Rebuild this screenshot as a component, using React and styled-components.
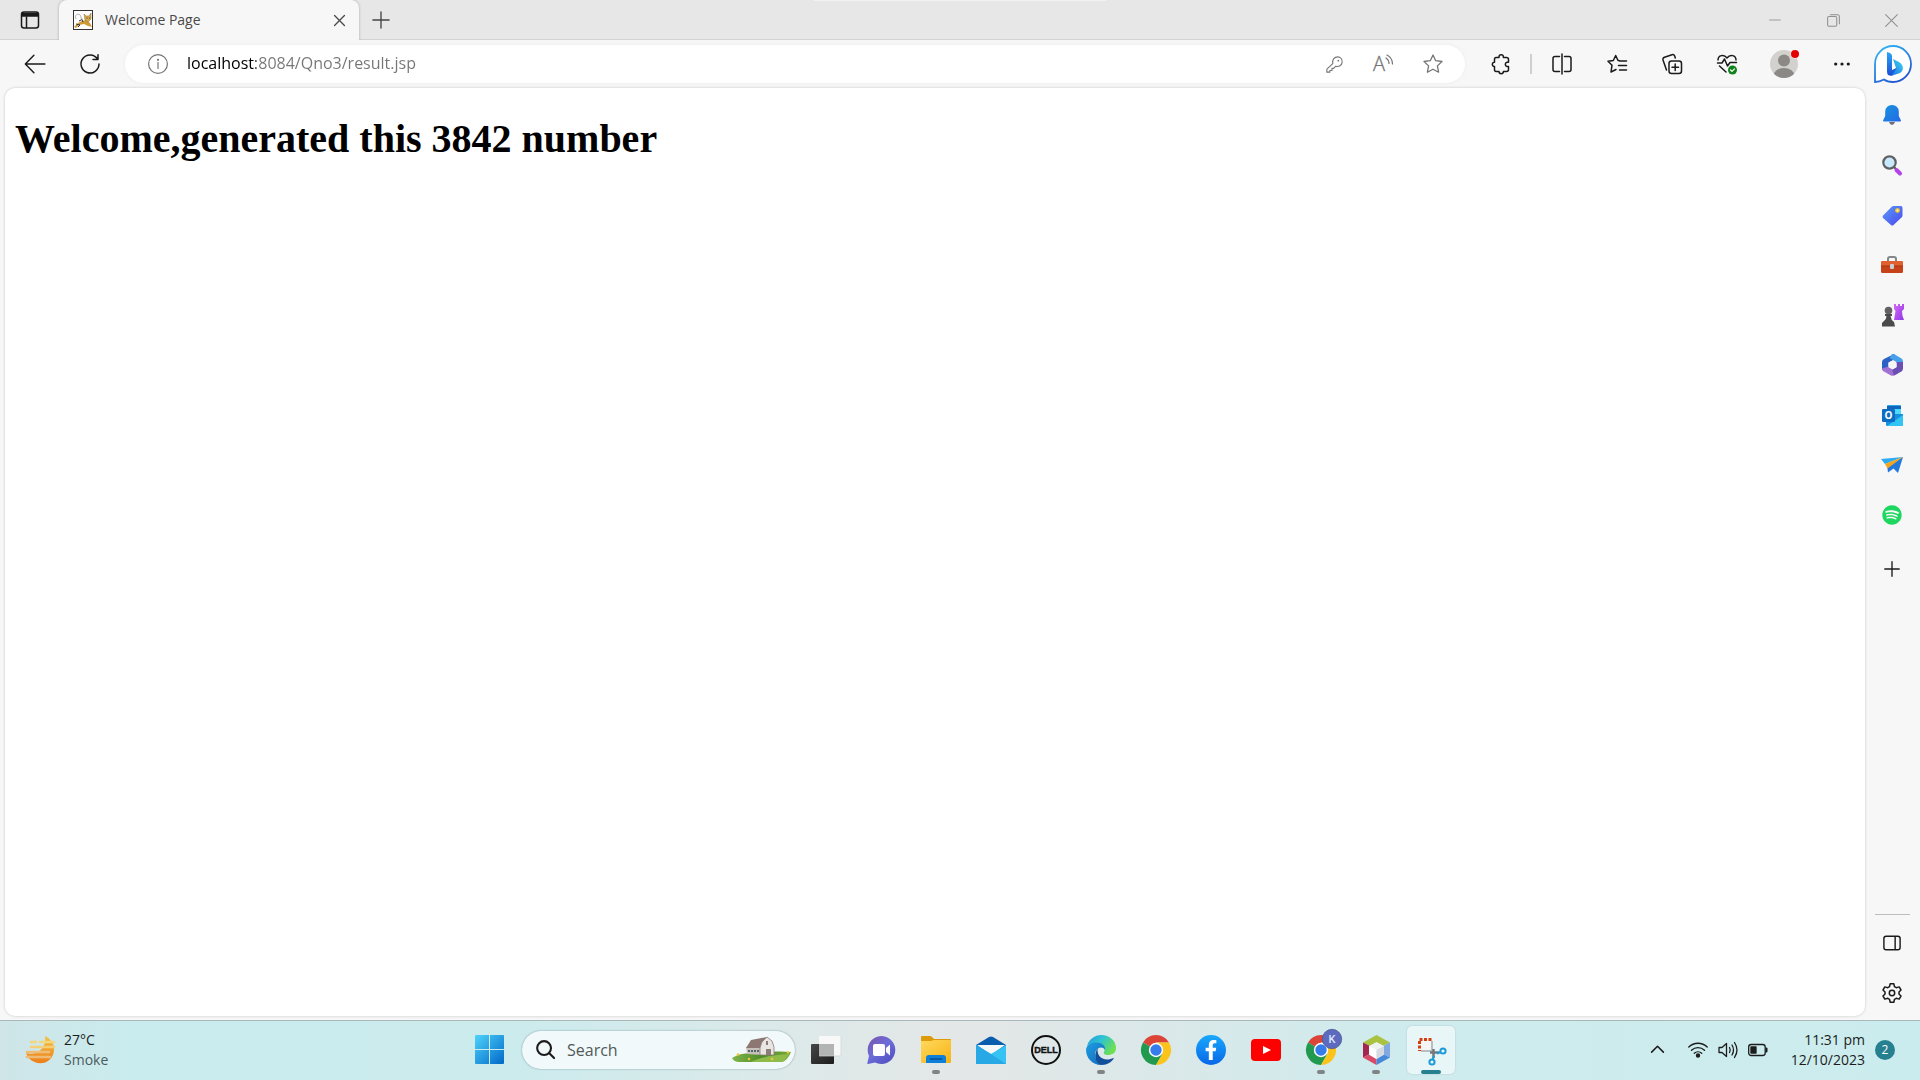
import React from "react";
import styled, { createGlobalStyle, css } from "styled-components";
import { FaFacebookF, FaSpotify } from "react-icons/fa";

const GlobalStyle = createGlobalStyle`
  *, *::before, *::after { box-sizing: border-box; }
  body { margin: 0; background: #f7f7f7; }
  button, input { font: inherit; color: inherit; border: 0; background: none; padding: 0; margin: 0; outline: none; }
  svg { display: block; flex: none; overflow: visible; }
`;

const ui = `"Segoe UI", "Open Sans", "Noto Sans", sans-serif`;

const Desktop = styled.div`
  display: flex;
  flex-direction: column;
  min-height: 100vh;
  font-family: ${ui};
  font-size: 14px;
  line-height: 20px;
`;

const Browser = styled.div`
  flex: 1;
  display: flex;
  flex-direction: column;
  background: #f7f7f7;
`;

const TabStrip = styled.header`
  display: flex;
  height: 40px;
  background: linear-gradient(#f2f2f2, #f2f2f2) center top / 292px 1px no-repeat, #e7e7e7;
  box-shadow: inset 0 -1px 0 #d2d2d2;
`;

const WorkspaceButton = styled.button`
  width: 59px;
  display: grid;
  place-items: center;
  color: #1a1a1a;
`;

const Tab = styled.div`
  position: relative;
  width: 300px;
  display: flex;
  align-items: center;
  gap: 12px;
  padding: 0 12px 0 14px;
  background: #f7f7f7;
  border-radius: 8px 8px 0 0;
  box-shadow: 0 0 3px rgba(0, 0, 0, 0.28);
  clip-path: inset(0 -6px 0 -6px);
  color: #4a4a4a;
`;

const TabTitle = styled.span`
  flex: 1;
  font-size: 14px;
`;

const SmallButton = styled.button`
  width: 16px;
  height: 24px;
  display: grid;
  place-items: center;
`;

const NewTabButton = styled.button`
  width: 44px;
  display: grid;
  place-items: center;
  color: #444;
`;

const WindowControls = styled.div`
  display: flex;
  margin-left: auto;
`;

const WindowButton = styled.button`
  width: 58px;
  display: grid;
  place-items: center;
  color: #8f8f8f;
`;

const Toolbar = styled.div`
  display: flex;
  align-items: center;
  height: 48px;
  padding: 0 3px 0 7px;
  color: #1b1b1b;
`;

const ToolButton = styled.button`
  width: ${(p) => p.$width || 55}px;
  height: 40px;
  display: grid;
  place-items: center;
`;

const AddressBar = styled.form`
  flex: 1;
  display: flex;
  align-items: center;
  height: 38px;
  margin: 0 8px;
  padding: 0 8px;
  border-radius: 20px;
  background: #fff;
  box-shadow: 0 0 4px rgba(0, 0, 0, 0.05);
  color: #757575;
`;

const AddressInput = styled.input`
  flex: 1;
  min-width: 0;
  height: 32px;
  padding: 0 0 2px 4px;
  font-size: 16px;
  background: linear-gradient(90deg, #000 73px, #767676 73px);
  background-clip: text;
  -webkit-text-fill-color: transparent;
`;

const Separator = styled.span`
  width: 2px;
  height: 20px;
  margin: 0 2px;
  background: #cfcfcf;
`;

const Body = styled.div`
  flex: 1;
  display: flex;
`;

const Page = styled.main`
  flex: 1;
  margin: 0 0 4px 5px;
  padding: 28px 10px;
  background: #fff;
  border-radius: 10px;
  box-shadow: 0 0 3px rgba(0, 0, 0, 0.2);
`;

const Heading = styled.h1`
  margin: 0;
  font-family: "Times New Roman", "Liberation Serif", serif;
  font-size: 40px;
  line-height: 46px;
  font-weight: 700;
  color: #000;
`;

const Sidebar = styled.aside`
  width: 55px;
  display: flex;
  flex-direction: column;
  align-items: center;
  padding: 2px 1px 2px 0;
`;

const SideButton = styled.button`
  width: 40px;
  height: 50px;
  display: grid;
  place-items: center;
  color: #1b1b1b;
`;

const AddButton = styled(SideButton)`
  height: 58px;
`;

const SideRule = styled.hr`
  width: 35px;
  height: 1px;
  margin: auto 0 3px;
  border: 0;
  background: #bdbdbd;
`;

const Taskbar = styled.footer`
  display: grid;
  grid-template-columns: 1fr auto 1fr;
  align-items: center;
  height: 60px;
  padding-bottom: 2px;
  border-top: 1px solid #a9b9bb;
  background: linear-gradient(90deg, #cfe5e8 0, #c9ecee 7%, #ccebed 27%, #dde9e9 41%, #e4e7e7 50%, #dbe8e9 60%, #cfebed 72%, #cbecee 100%);
  color: #1c1c1c;
`;

const Weather = styled.button`
  display: flex;
  align-items: center;
  gap: 8px;
  padding-left: 25px;
  text-align: left;
`;

const Lines = styled.span`
  display: flex;
  flex-direction: column;
  text-align: ${(p) => (p.$end ? "right" : "left")};
`;

const Muted = styled.span`
  color: #4c5b5d;
`;

const Dock = styled.nav`
  display: flex;
  align-items: center;
  gap: 7px;
`;

const DockButton = styled.button`
  position: relative;
  width: 48px;
  height: 48px;
  display: grid;
  place-items: center;
  border-radius: 5px;
  ${(p) =>
    p.$active &&
    css`
      background: #e8f6f7;
      box-shadow: 0 0 2px rgba(0, 0, 0, 0.15);
    `}
  ${(p) =>
    (p.$running || p.$active) &&
    css`
      &::after {
        content: "";
        position: absolute;
        bottom: 0;
        left: 50%;
        width: ${p.$active ? 20 : 8}px;
        height: 4px;
        margin-left: ${p.$active ? -10 : -4}px;
        border-radius: 2px;
        background: ${p.$active ? "#26808f" : "#808485"};
      }
    `}
`;

const SearchBox = styled.label`
  display: flex;
  align-items: center;
  gap: 12px;
  width: 273px;
  height: 38px;
  margin-left: 2px;
  padding: 0 4px 0 14px;
  border-radius: 20px;
  background: #f2f9fa;
  box-shadow: 0 0 2px rgba(0, 50, 60, 0.45);
`;

const SearchInput = styled.input`
  flex: 1;
  min-width: 0;
  font-size: 16px;
  &::placeholder {
    color: #515a5b;
    opacity: 1;
  }
`;

const Tray = styled.div`
  display: flex;
  align-items: center;
  justify-content: flex-end;
  padding-right: 25px;
`;

const TrayButton = styled.button`
  width: ${(p) => p.$width || 30}px;
  height: 40px;
  display: grid;
  place-items: center;
`;

const Clock = styled.button`
  display: flex;
  align-items: center;
  gap: 10px;
  padding-left: 18px;
`;

const Count = styled.span`
  width: 20px;
  height: 20px;
  border-radius: 50%;
  background: #26808f;
  color: #fff;
  font-size: 12px;
  text-align: center;
`;

function Line({ size = 20, w = 1.5, children, ...rest }) {
  return (
    <svg width={size} height={size} viewBox="0 0 20 20" fill="none" stroke="currentColor" strokeWidth={w} strokeLinecap="round" strokeLinejoin="round" {...rest}>
      {children}
    </svg>
  );
}

const STAR = "M10 1 12.7 6.7 19 7.5 14.4 11.9 15.6 18.2 10 15.2 4.4 18.2 5.6 11.9 1 7.5 7.3 6.7Z";

const TomcatIcon = () => (
  <svg width="20" height="20" viewBox="0 0 20 20">
    <rect x=".5" y=".5" width="19" height="19" fill="#fff" stroke="#333" />
    <path d="M1 17 5 13 9 11 13 10 17 13 19 17 15 16 11 14 6 15 3 18Z" fill="#d09a36" />
    <path d="M11 4 13 6 16 6 18 3 18 9 15 12 12 10Z" fill="#d8ab4e" stroke="#8a6a2c" strokeWidth=".5" />
    <path d="M6 11 9 9.500 10 12M3 14 7 15 5 17" stroke="#333" strokeWidth="1" fill="none" />
    <path d="M3 9C1 5 5 3 7 5S7 10 10 9" stroke="#aaa" fill="none" />
    <circle cx="14" cy="8" r=".6" fill="#333" /><circle cx="16.500" cy="8" r=".6" fill="#333" />
  </svg>
);

const BingIcon = () => (
  <svg width="38" height="38" viewBox="0 0 38 38">
    <defs>
      <linearGradient id="bingRing" x1="0" y1="0" x2=".6" y2="1"><stop stopColor="#35bdf2" /><stop offset="1" stopColor="#2257d2" /></linearGradient>
      <linearGradient id="bingStem" x1="0" y1="0" x2="0" y2="1"><stop stopColor="#2ba5f5" /><stop offset="1" stopColor="#1a4fd6" /></linearGradient>
      <linearGradient id="bingBowl" x1="1" y1="0" x2="0" y2="1"><stop stopColor="#35dcf0" /><stop offset="1" stopColor="#2463e0" /></linearGradient>
    </defs>
    <path d="M1 37V19A18 18 0 1 1 19 37C15 37 12 36 10 34.500 7 36 4 37 1 37Z" fill="#fff" stroke="url(#bingRing)" strokeWidth="1.800" />
    <path d="M19 14 25 17C30 20 30 26 26 28L17 31 14 28 22 23Z" fill="url(#bingBowl)" />
    <path d="M13 7 16 8Q18 9 18 11V25L23 23 18 30Q13 32 13 26Z" fill="url(#bingStem)" />
  </svg>
);

const AvatarIcon = () => (
  <svg width="28" height="28" viewBox="0 0 28 28">
    <clipPath id="avatarClip"><circle cx="14" cy="14" r="14" /></clipPath>
    <circle cx="14" cy="14" r="14" fill="#d3d1ce" />
    <circle cx="14" cy="10.500" r="6" fill="#8b8886" />
    <ellipse cx="14" cy="26" rx="10.500" ry="8" fill="#8b8886" clipPath="url(#avatarClip)" />
    <circle cx="25" cy="4" r="4.500" fill="#f7f7f7" /><circle cx="25" cy="4" r="4" fill="#e50000" />
  </svg>
);

const BellIcon = () => (
  <svg width="20" height="20" viewBox="0 0 20 20">
    <linearGradient id="bell" x2="1" y2="1"><stop stopColor="#1694dc" /><stop offset="1" stopColor="#2668e8" /></linearGradient>
    <path d="M7 17H13Q12 20 10 20T7 17Z" fill="#6d7075" />
    <path d="M10 0A6.500 6.500 0 0 1 16.800 6.500V11L19 15.500Q19 16.500 18 16.500H2Q1 16.500 1 15.500L3.200 11V6.500A6.500 6.500 0 0 1 10 0Z" fill="url(#bell)" />
  </svg>
);

const MagnifierIcon = () => (
  <svg width="20" height="20" viewBox="0 0 20 20">
    <path d="M11 11 14 14" stroke="#555" strokeWidth="2" />
    <path d="M14.500 15 18 18.500" stroke="#b541e8" strokeWidth="4" strokeLinecap="round" />
    <circle cx="7.500" cy="7.500" r="6.200" fill="#c8e9fb" stroke="#5e6064" strokeWidth="2.200" />
  </svg>
);

const TagIcon = () => (
  <svg width="21" height="21" viewBox="0 0 21 21">
    <linearGradient id="tag" x2="1" y2="1"><stop stopColor="#5b9cf8" /><stop offset="1" stopColor="#4a47ee" /></linearGradient>
    <path d="M11 1H19Q20.500 1 20.500 3V10Q20.500 11 20 12L11.500 20Q10.500 21 9 20L1 13Q0 12 1 10.500L9.500 2Z" fill="url(#tag)" />
    <circle cx="15.500" cy="5.500" r="1.800" fill="#fff3b4" stroke="#eec02c" strokeWidth="1.300" />
  </svg>
);

const ToolboxIcon = () => (
  <svg width="22" height="18" viewBox="0 0 22 18">
    <path d="M7 5V3Q7 1 9 1H13Q15 1 15 3V5" fill="none" stroke="#83878a" strokeWidth="2" />
    <rect y="5" width="22" height="12" rx="1.500" fill="#c5421b" />
    <path d="M0 6.500Q0 5 1.500 5H20.500Q22 5 22 6.500V10H0Z" fill="#e1602f" />
    <path d="M0 10H22" stroke="#a83412" />
    <rect x="9" y="8" width="4" height="5" rx="1" fill="#c9cdd0" />
  </svg>
);

const ChessIcon = () => (
  <svg width="23" height="23" viewBox="0 0 23 23">
    <linearGradient id="rook" x2="1" y2="1"><stop stopColor="#d76bf5" /><stop offset="1" stopColor="#8d35e8" /></linearGradient>
    <path d="M13 0H15V2H17V0H19V2H21V0H23V5L21 7 21.500 12 23 16H13L14.500 7 13 5Z" fill="url(#rook)" />
    <circle cx="7.500" cy="6.500" r="3.800" fill="#626262" />
    <path d="M4 10H11V12H9.500Q10 16 13 18L14 22.500H1V19L3 17Q5.500 15 5.500 12H4Z" fill="#4b4b4b" />
  </svg>
);

const M365Icon = () => (
  <svg width="21" height="22" viewBox="0 0 21 22">
    <path d="M12 0 2 5Q0 6 0 8V15.500L6.500 13V8.500L15 4Z" fill="#2c62c4" />
    <path d="M10 0H12L19.500 4.500Q21 5.500 21 7.500V13L14.500 9.500V8L7.500 4Z" fill="#47a0ea" />
    <path d="M0 14.500 6.500 12.500 10.500 15 16 19.500 12 21.500Q10.500 22 9 21.500L1 17Q0 16 0 14.500Z" fill="#a070d2" />
    <path d="M21 8V14.500Q21 16.500 19.500 17.500L12 21.500 10 15.500 14.500 13V8Z" fill="#6b50b4" />
    <path d="M10.500 6.500 14.500 8.800V13.200L10.500 15.500 6.500 13.200V8.800Z" fill="#f7f7f7" />
  </svg>
);

const OutlookIcon = () => (
  <svg width="21" height="21" viewBox="0 0 21 21">
    <rect x="5" y="0" width="14" height="14" rx="1" fill="#28a8ea" /><path d="M5 1H19V4H5Z" fill="#0f66ba" />
    <path d="M12 4H19V10H12Z" fill="#50d9ff" />
    <path d="M4 9H21V19.500Q21 21 19.500 21H5.500Q4 21 4 19.500Z" fill="#1490df" /><path d="M5 21 21 10V19.500Q21 21 19.500 21Z" fill="#32c4f3" />
    <rect y="4" width="13" height="13" rx="1.200" fill="#0d6dc4" />
    <text x="6.500" y="14" textAnchor="middle" fontFamily="Open Sans, sans-serif" fontWeight="700" fontSize="10" fill="#fff">O</text>
  </svg>
);

const PlaneIcon = () => (
  <svg width="22" height="18" viewBox="0 0 22 18">
    <path d="M22 1 17 17 12.500 12.500 7 16.500 6 9Z" fill="#2378dc" />
    <path d="M22 1 0 3 4 8Z" fill="#2fabef" /><path d="M22 1 4 8 6.500 12.500Z" fill="#f4a51c" />
  </svg>
);

const WeatherIcon = () => (
  <svg width="31" height="28" viewBox="0 0 31 28">
    <linearGradient id="moon" x2="0" y2="1"><stop stopColor="#f2c64a" /><stop offset="1" stopColor="#ee7d16" /></linearGradient>
    <path d="M20 0C31 5 32 19 23 25 15 30 4 26 1 17 10 20 22 14 20 0Z" fill="url(#moon)" />
    <g strokeWidth="2.600" strokeLinecap="round" fill="none">
      <path d="M6 6H11M15 6H29" stroke="#f6d67b" /><path d="M6 11H29" stroke="#f5cf77" /><path d="M2 16H24" stroke="#edbe79" /><path d="M2 21H25" stroke="#eebb77" />
    </g>
  </svg>
);

const WindowsIcon = () => (
  <svg width="29" height="29" viewBox="0 0 29 29">
    <linearGradient id="win" gradientUnits="userSpaceOnUse" x1="0" y1="0" x2="29" y2="29"><stop stopColor="#4fd3fb" /><stop offset="1" stopColor="#0068c8" /></linearGradient>
    <path fill="url(#win)" d="M1 0H14V14H0V1Q0 0 1 0ZM15 0H28Q29 0 29 1V14H15ZM0 15H14V29H1Q0 29 0 28ZM15 15H29V28Q29 29 28 29H15Z" />
  </svg>
);

const BarnIcon = () => (
  <svg width="60" height="26" viewBox="0 0 60 26">
    <linearGradient id="hill" x2="1"><stop stopColor="#82b54a" /><stop offset=".5" stopColor="#4f8c29" /><stop offset="1" stopColor="#76a83b" /></linearGradient>
    <path d="M1 21C10 15 20 16 30 17 40 14 50 14 60 15 57 22 53 25 50 25H8Q3 25 1 21Z" fill="url(#hill)" />
    <path d="M20 25C32 19 46 18 58 17 55 22 53 25 50 25Z" fill="#8fbb4b" />
    <path d="M15 10H31V18L16 17Z" fill="#c9bfbb" />
    <path d="M20 3 36 0 31 5 29 11 15 11Z" fill="#8c7772" />
    <path d="M29 11 31 5 36 0 41 4 43 10V18H29Z" fill="#e9e5e2" stroke="#8c7a74" strokeWidth=".8" />
    <path d="M35 12H40V18H35ZM35 4H37V8H35Z" fill="#8d7d78" />
    <path d="M17 14H28" stroke="#53666c" strokeWidth="2" strokeDasharray="2 1" />
    <g fill="#efc92f"><circle cx="7" cy="17.500" r="1.300" /><circle cx="18" cy="22" r="1.300" /><circle cx="41" cy="22" r="1.300" /><circle cx="57" cy="15.500" r="1.300" /></g>
  </svg>
);

const TaskViewIcon = () => (
  <svg width="30" height="28" viewBox="0 0 30 28">
    <linearGradient id="tv" y2="1"><stop stopColor="#464646" /><stop offset="1" stopColor="#1d1d1d" /></linearGradient>
    <rect y="8" width="23" height="20" rx="1" fill="url(#tv)" />
    <rect x="8" width="22" height="20" rx="1" fill="#f8f8f8" /><path d="M8 8H23V20H8Z" fill="#b2b3b3" />
    <path d="M8 20H30V0" stroke="#cfd2d2" fill="none" strokeWidth=".7" />
  </svg>
);

const ChatIcon = () => (
  <svg width="29" height="28" viewBox="0 0 29 28">
    <linearGradient id="chat" x1="0" y1="0" x2=".8" y2="1"><stop stopColor="#7c52a8" /><stop offset=".5" stopColor="#6c6ed8" /><stop offset="1" stopColor="#5150c4" /></linearGradient>
    <path d="M14.500 0A14 14 0 1 1 8 26.500L1 28Q0 28 .3 27L2 20A14 14 0 0 1 14.500 0Z" fill="url(#chat)" />
    <rect x="6" y="8" width="12" height="12" rx="2" fill="#fff" /><path d="M19 12 23 8.500V19.500L19 16Z" fill="#fff" />
  </svg>
);

const FolderIcon = () => (
  <svg width="30" height="27" viewBox="0 0 30 27">
    <linearGradient id="fold" x2="1" y2="1"><stop stopColor="#ffd95c" /><stop offset="1" stopColor="#f8b316" /></linearGradient>
    <path d="M0 1Q0 0 1 0H9Q10 0 11 1L13 3H29Q30 3 30 4V10H0Z" fill="#dd9a09" />
    <path d="M0 5H10L13 4H30V26Q30 27 29 27H1Q0 27 0 26Z" fill="url(#fold)" />
    <path d="M5 27V22Q5 19 8 19H22Q25 19 25 22V27Z" fill="#0f80d8" /><path d="M9 23H21" stroke="#0a4f93" strokeWidth="1.500" />
  </svg>
);

const MailIcon = () => (
  <svg width="30" height="28" viewBox="0 0 30 28">
    <path d="M0 9 13 1Q15 0 17 1L30 9V15H0Z" fill="#0a5cac" />
    <path d="M1 9H29L15 19Z" fill="#f6f7f8" />
    <path d="M0 9 15 18 30 9V28H0Z" fill="#34c3f2" /><path d="M0 9 15 18 30 28H0Z" fill="#28a8e5" />
  </svg>
);

const DellIcon = () => (
  <svg width="30" height="30" viewBox="0 0 30 30">
    <circle cx="15" cy="15" r="14" fill="none" stroke="#111" strokeWidth="2" />
    <text x="15" y="18" textAnchor="middle" fontFamily="Liberation Sans, Arial, sans-serif" fontWeight="700" fontSize="9" fill="#111" stroke="#111" strokeWidth=".4">DELL</text>
  </svg>
);

const EdgeIcon = () => (
  <svg width="30" height="30" viewBox="0 0 30 30">
    <defs>
      <linearGradient id="e1" x2="1" y2=".5"><stop stopColor="#2199dc" /><stop offset=".5" stopColor="#2fc3d2" /><stop offset="1" stopColor="#6ce052" /></linearGradient>
      <linearGradient id="e2" y2="1"><stop stopColor="#1b9de2" /><stop offset="1" stopColor="#1569b8" /></linearGradient>
    </defs>
    <path d="M1 11C3 4 9 0 15 0 24 0 30 6 30 13 30 18 26 20 22 20 19 20 17 19 18 17 21 11 15 8 10 8 6 8 3 9 1 11Z" fill="url(#e1)" />
    <path d="M0 15C0 11 4 7.500 10 7.500 16 7.500 20 11 19 15 16 10 9 13 9 20 9 25 13 29 17 29.800 8 31 0 24 0 15Z" fill="url(#e2)" />
    <path d="M12 13C10 19 15 25 22 24.500 25 24.500 26 23 28 23 26 27 21 30 16 30 9 29 7 19 12 13Z" fill="#124f9b" />
  </svg>
);

const ChromeMark = () => (
  <>
    <path d="M15 15 2 7.500A15 15 0 0 1 28 7.500H15Z" fill="#db4437" />
    <path d="M15 15 2 7.500A15 15 0 0 0 15 30L21.500 18.700Z" fill="#219a50" />
    <path d="M15 7.500H28A15 15 0 0 1 15 30L21.500 18.700Z" fill="#fcc31b" />
    <circle cx="15" cy="15" r="7.200" fill="#fff" /><circle cx="15" cy="15" r="5.700" fill="#377ceb" />
  </>
);
const ChromeIcon = () => (<svg width="30" height="30" viewBox="0 0 30 30"><ChromeMark /></svg>);
const ChromeProfileIcon = () => (
  <svg width="30" height="30" viewBox="0 0 30 30">
    <ChromeMark />
    <circle cx="26" cy="4" r="9.700" fill="#5c6bc0" stroke="#4c5892" strokeWidth=".8" />
    <text x="26" y="8" textAnchor="middle" fontFamily="Roboto, sans-serif" fontSize="11" fontWeight="500" fill="#dfe3f6">K</text>
  </svg>
);

const FacebookDisc = styled.span`
  width: 30px;
  height: 30px;
  display: grid;
  place-items: center;
  border-radius: 50%;
  background: linear-gradient(#18a8fb, #0867e8);
  color: #fff;
`;
const FacebookIcon = () => (<FacebookDisc><FaFacebookF size={20} /></FacebookDisc>);

const YoutubeIcon = () => (
  <svg width="30" height="30" viewBox="0 0 30 30"><rect y="4" width="30" height="22" rx="4" fill="#f00" /><path d="M12 11V19L20 15Z" fill="#fff" /></svg>
);

const NetbeansIcon = () => (
  <svg width="27" height="30" viewBox="0 0 27 30">
    <path d="M13.500 0 27 7.500 20 11 13.500 8 7 11 0 7.500Z" fill="#a9c240" />
    <path d="M0 7.500 7 11V19L0 22.500Z" fill="#a3264f" /><path d="M0 22.500 7 19 13.500 23V30Z" fill="#d94a69" />
    <path d="M27 7.500 20 11V19L27 22.500Z" fill="#82a9df" /><path d="M27 22.500 20 19 13.500 23V30Z" fill="#4789d8" />
    <path d="M13.500 7 21 11V19.500L13.500 24 6 19.500V11Z" fill="#eef2f1" /><path d="M13.500 15V24L6 19.500V11Z" fill="#fff" /><path d="M13.500 15 21 11V19.500L13.500 24Z" fill="#d3dbe1" />
  </svg>
);

const SnipIcon = () => (
  <svg width="30" height="30" viewBox="0 0 30 30">
    <path d="M2 2H16V15H2Z" fill="#f4f5f5" />
    <path d="M15.500 4.500H3.500V16" fill="none" stroke="#d43f10" strokeWidth="3" strokeDasharray="3 1.500" />
    <path d="M16 6V16H5" fill="none" stroke="#b9bdbf" strokeWidth="2" />
    <path d="M14 17.500H23M17.500 14V23" stroke="#73797c" strokeWidth="2.500" />
    <circle cx="27" cy="16" r="2.600" fill="none" stroke="#1d9bd8" strokeWidth="2" /><path d="M21 18.500 25 17M18 21 16.500 25" stroke="#1d9bd8" strokeWidth="2" />
    <circle cx="16" cy="27" r="2.600" fill="none" stroke="#1d9bd8" strokeWidth="2" />
  </svg>
);

const sideApps = [
  ["Notifications", BellIcon], ["Search", MagnifierIcon], ["Shopping", TagIcon], ["Tools", ToolboxIcon],
  ["Games", ChessIcon], ["Microsoft 365", M365Icon], ["Outlook", OutlookIcon], ["Drop", PlaneIcon],
];

const dockApps = [
  ["Task view", TaskViewIcon], ["Chat", ChatIcon], ["File Explorer", FolderIcon, true], ["Mail", MailIcon],
  ["Dell", DellIcon], ["Edge", EdgeIcon, true], ["Chrome", ChromeIcon], ["Facebook", FacebookIcon],
  ["YouTube", YoutubeIcon], ["Chrome profile", ChromeProfileIcon, true], ["NetBeans", NetbeansIcon, true],
  ["Snipping Tool", SnipIcon, false, true],
];

export default function App() {
  return (
    <Desktop>
      <GlobalStyle />
      <Browser>
        <TabStrip>
          <WorkspaceButton aria-label="Tab actions">
            <Line><rect x="1.500" y="2" width="17" height="16" rx="2.500" /><path d="M2 3.500H18V6H2Z" fill="currentColor" /><path d="M6.500 7V17.500" /></Line>
          </WorkspaceButton>
          <Tab>
            <TomcatIcon />
            <TabTitle>Welcome Page</TabTitle>
            <SmallButton aria-label="Close tab"><Line size={11} w={2.4}><path d="M1 1 19 19M19 1 1 19" /></Line></SmallButton>
          </Tab>
          <NewTabButton aria-label="New tab"><Line size={18} w={1.5}><path d="M10 1V19M1 10H19" /></Line></NewTabButton>
          <WindowControls>
            <WindowButton aria-label="Minimize"><Line size={12} w={1.4}><path d="M1 10H19" /></Line></WindowButton>
            <WindowButton aria-label="Restore"><Line size={13} w={1.6}><rect x="1" y="4" width="14" height="15" rx="2" /><path d="M5 1H16Q19 1 19 4V15" /></Line></WindowButton>
            <WindowButton aria-label="Close"><Line size={13} w={1.6}><path d="M1 1 19 19M19 1 1 19" /></Line></WindowButton>
          </WindowControls>
        </TabStrip>

        <Toolbar>
          <ToolButton aria-label="Back"><Line size={22} w={1.3}><path d="M19 10H1.500M9 2 1.200 10 9 18" /></Line></ToolButton>
          <ToolButton aria-label="Refresh"><Line w={1.5}><path d="M17.500 5A9 9 0 1 0 19 10M18 .8V5.500H13" /></Line></ToolButton>
          <AddressBar onSubmit={(e) => e.preventDefault()}>
            <ToolButton type="button" $width={50} aria-label="Site information">
              <Line w={1.2}><circle cx="10" cy="10" r="9.400" /><path d="M10 8.500V14.500" /><circle cx="10" cy="5.800" r=".5" fill="currentColor" /></Line>
            </ToolButton>
            <AddressInput aria-label="Address" defaultValue="localhost:8084/Qno3/result.jsp" spellCheck="false" />
            <ToolButton type="button" $width={50} aria-label="Passwords">
              <Line size={17} w={1.3}><path d="M8 9C7 4 10 1 14 1 17 1 19.500 4 19 7.500 18.500 11 15 13 11.500 12L9 14.500H7V17H4.500V19H1V15.500Z" /><circle cx="14.500" cy="5.500" r="1" fill="currentColor" stroke="none" /></Line>
            </ToolButton>
            <ToolButton type="button" $width={50} aria-label="Read aloud">
              <Line w={1.2}>
                <text x="-1" y="17" fontFamily="Open Sans, sans-serif" fontSize="20" fontWeight="300" fill="currentColor" stroke="currentColor" strokeWidth=".3">A</text>
                <path d="M12 4Q15 6 15 9.500M13 1Q18.500 4 18.500 10" />
              </Line>
            </ToolButton>
            <ToolButton type="button" $width={48} aria-label="Add to favourites"><Line w={1.3}><path d={STAR} /></Line></ToolButton>
          </AddressBar>
          <ToolButton aria-label="Extensions">
            <Line w={1.5}><path d="M5 3.500H8V3A2.200 2.200 0 0 1 12.400 3V3.500H15.500Q17.500 3.500 17.500 5.500V8.200H16A2.200 2.200 0 0 0 16 12.500H17.500V15.500Q17.500 17.500 15.500 17.500H12.400A2.200 2.200 0 0 1 8 17.500H5Q3.500 17.500 3.500 15.500V12.500H3A2.200 2.200 0 0 1 3 8.200H3.500V5.500Q3.500 3.500 5 3.500Z" /></Line>
          </ToolButton>
          <Separator />
          <ToolButton aria-label="Split screen"><Line><path d="M7.500 2.500H3Q1 2.500 1 4.500V15.500Q1 17.500 3 17.500H7.500M12.500 2.500H17Q19 2.500 19 4.500V15.500Q19 17.500 17 17.500H12.500M10 0V20" /></Line></ToolButton>
          <ToolButton aria-label="Favourites"><Line><path d="M12 6.500H11L8.700 1.500 6.300 6.500 1 7.300 5 11.200 4 18 9 15.500M12.500 7H19.500M11.500 11.500H19.500M12.500 16H19.500" /></Line></ToolButton>
          <ToolButton aria-label="Collections"><Line><rect x="7" y="7" width="12.500" height="12.500" rx="2.500" /><path d="M13.200 10V16.500M10 13.200H16.500M4.500 16 1 6Q.5 4 2.500 3.200L10 .7Q12 .2 12.700 2L13.300 4" /></Line></ToolButton>
          <ToolButton aria-label="Performance">
            <Line><path d="M.5 9H5L7.500 5 10.500 12 13 8.500H19.500M1 6C1 1 7 0 10 4 13 0 19 1 19 6M2.500 12 9 18" /><circle cx="15.500" cy="16" r="4.500" fill="#11821b" stroke="none" /><path d="M13.500 16 15 17.300 17.500 14.800" stroke="#fff" strokeWidth="1.200" /></Line>
          </ToolButton>
          <ToolButton $width={60} aria-label="Profile"><AvatarIcon /></ToolButton>
          <ToolButton aria-label="Settings and more"><Line size={18}><g fill="currentColor" stroke="none"><circle cx="3" cy="10" r="1.800" /><circle cx="10" cy="10" r="1.800" /><circle cx="17" cy="10" r="1.800" /></g></Line></ToolButton>
          <ToolButton $width={48} aria-label="Bing chat"><BingIcon /></ToolButton>
        </Toolbar>

        <Body>
          <Page><Heading>Welcome,generated this 3842 number</Heading></Page>
          <Sidebar>
            {sideApps.map(([name, Icon]) => (<SideButton key={name} aria-label={name}><Icon /></SideButton>))}
            <SideButton aria-label="Spotify"><FaSpotify size={20} color="#1ed760" /></SideButton>
            <AddButton aria-label="Customize"><Line size={16} w={1.7}><path d="M10 1V19M1 10H19" /></Line></AddButton>
            <SideRule />
            <SideButton aria-label="Hide sidebar"><Line size={18} w={1.6}><rect x="1" y="2.500" width="18" height="15" rx="2.500" /><path d="M13.500 3V17" /></Line></SideButton>
            <SideButton aria-label="Settings">
              <Line w={1.5}><circle cx="10" cy="10" r="2.700" /><path d="M8.200.8H11.800L12.500 3.700 14.200 4.700 17.200 3.900 19 7 17 9V11L19 13 17.200 16.100 14.200 15.300 12.500 16.300 11.800 19.200H8.200L7.500 16.300 5.800 15.300 2.800 16.100 1 13 3 11V9L1 7 2.800 3.900 5.800 4.700 7.500 3.700Z" /></Line>
            </SideButton>
          </Sidebar>
        </Body>
      </Browser>

      <Taskbar>
        <Weather><WeatherIcon /><Lines><span>27°C</span><Muted>Smoke</Muted></Lines></Weather>
        <Dock>
          <DockButton aria-label="Start"><WindowsIcon /></DockButton>
          <SearchBox>
            <Line size={19} w={2.2}><circle cx="8.500" cy="8.500" r="7.300" /><path d="M14 14 19 19" /></Line>
            <SearchInput type="text" placeholder="Search" aria-label="Search" />
            <BarnIcon />
          </SearchBox>
          {dockApps.map(([name, Icon, running, active]) => (
            <DockButton key={name} aria-label={name} $running={running} $active={active}><Icon /></DockButton>
          ))}
        </Dock>
        <Tray>
          <TrayButton $width={50} aria-label="Hidden icons"><Line size={13} w={2.4}><path d="M1 14 10 5 19 14" /></Line></TrayButton>
          <TrayButton aria-label="Network"><Line w={1.4}><path d="M.8 7A13 13 0 0 1 19.200 7M3.500 10.200A9.500 9.500 0 0 1 16.500 10.200M6.300 13.300A5.500 5.500 0 0 1 13.700 13.300" /><circle cx="10" cy="15.500" r="1.500" fill="currentColor" /></Line></TrayButton>
          <TrayButton aria-label="Volume"><Line w={1.3}><path d="M1 7.500H4L8.500 3.500V16.500L4 12.500H1ZM11.500 7.500Q13 10 11.500 12.500M14 5Q17 10 14 15M16.500 2.500Q21.500 10 16.500 17.500" /></Line></TrayButton>
          <TrayButton aria-label="Battery"><Line w={1.3}><rect x=".7" y="4.500" width="16.500" height="11" rx="2.500" /><path d="M3 7H8V13H3Z" fill="currentColor" /><path d="M18.500 8.500V11.500" strokeWidth="2" /></Line></TrayButton>
          <Clock><Lines $end><span>11:31 pm</span><span>12/10/2023</span></Lines><Count>2</Count></Clock>
        </Tray>
      </Taskbar>
    </Desktop>
  );
}
